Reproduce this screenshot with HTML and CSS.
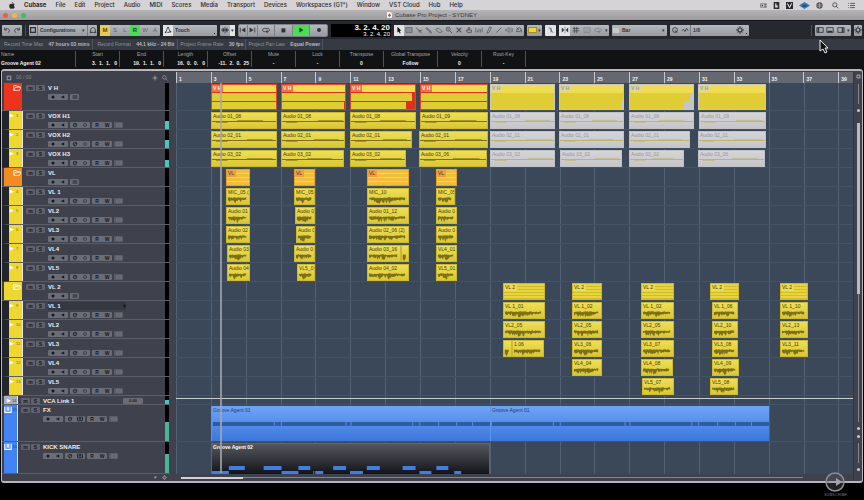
FILE: index.html
```html
<!DOCTYPE html>
<html lang="en">
  <head>
    <title>Cubase Pro Project - SYDNEY</title>
    <meta charset="UTF-8" />
    <link rel="stylesheet" href="styles.css">
  </head>
  <body>
    <svg class="symbols" aria-hidden="true">
      <symbol id="undo" viewBox="0 0 10 10"><path d="M2 2v3h3M2 5c2-3 6-2 6 1 0 1-1 2-2 2" fill="none" stroke="currentColor"/></symbol>
      <symbol id="redo" viewBox="0 0 10 10"><path d="M8 2v3H5M8 5C6 2 2 3 2 6c0 1 1 2 2 2" fill="none" stroke="currentColor"/></symbol>
      <symbol id="square" viewBox="0 0 10 10"><path d="M2 2h6v6H2z" fill="none" stroke="currentColor" stroke-width="1.5"/></symbol>
      <symbol id="house" viewBox="0 0 10 10"><path d="M2 8V5c0-4 6-4 6 0v3zM1 8h2M7 8h2" fill="none" stroke="currentColor"/></symbol>
      <symbol id="auto" viewBox="0 0 10 10"><path d="M2 8c1-1 2-6 3-6s2 5 3 6M4 8h3" fill="none" stroke="currentColor"/><circle cx="5" cy="2" r="1"/><circle cx="2" cy="8" r="1"/><circle cx="8" cy="7" r="1"/></symbol>
      <symbol id="center" viewBox="0 0 10 10"><path d="M0 5h3M7 5h3M5 1v8" stroke="currentColor"/><path d="M2 2l3 3-3 3zM8 2L5 5l3 3z"/></symbol>
      <symbol id="prev" viewBox="0 0 10 10"><path d="M1 2h1v6H1zM8 2L3 5l5 3z"/></symbol>
      <symbol id="next" viewBox="0 0 10 10"><path d="M8 2h1v6H8zM2 2l5 3-5 3z"/></symbol>
      <symbol id="loop" viewBox="0 0 10 10"><path d="M4 7H3C0 7 0 3 3 3h4c3 0 3 4 0 4" fill="none" stroke="currentColor"/><path d="M7 5v4L4 7z"/></symbol>
      <symbol id="stop" viewBox="0 0 10 10"><path d="M3 3h5v5H3z"/></symbol>
      <symbol id="play" viewBox="0 0 10 10"><path d="M3 2l5 3-5 3z"/></symbol>
      <symbol id="rec" viewBox="0 0 10 10"><circle cx="5" cy="5" r="2.5"/></symbol>
      <symbol id="arrow" viewBox="0 0 10 10"><path d="M3 1l5 5H6l1 3-1 .5L4.5 7 3 8z"/></symbol>
      <symbol id="range" viewBox="0 0 10 10"><path d="M1 2h8v6H1z" fill="#8d9094" stroke="currentColor" stroke-width=".7"/></symbol>
      <symbol id="split" viewBox="0 0 10 10"><path d="M1 2l5 4 3-1M5 5v3M6 6l2 3" fill="none" stroke="currentColor"/></symbol>
      <symbol id="glue" viewBox="0 0 10 10"><path d="M2 2l5 4 1 3-3-2-4-4z" fill="#888b90" stroke="currentColor" stroke-width=".7"/></symbol>
      <symbol id="erase" viewBox="0 0 10 10"><path d="M2 3h3l4 4-2 1H5L1 5z" fill="none" stroke="currentColor" stroke-width=".8"/></symbol>
      <symbol id="zoom" viewBox="0 0 10 10"><circle cx="4" cy="4" r="2.5" fill="none" stroke="currentColor"/><path d="M6 6l3 3M3 4h2" stroke="currentColor"/></symbol>
      <symbol id="mute" viewBox="0 0 10 10"><path d="M2 2l6 6M8 2L2 8" stroke="currentColor" stroke-width="1.4"/></symbol>
      <symbol id="comp" viewBox="0 0 10 10"><path d="M2 5h6v3H3zM4 5V2h2v3M1 6h1" fill="none" stroke="currentColor"/></symbol>
      <symbol id="warp" viewBox="0 0 10 10"><path d="M1 2v6M9 2v6M3 8V5M5 8V3M7 8V4" fill="none" stroke="currentColor" stroke-width=".8"/></symbol>
      <symbol id="pen" viewBox="0 0 10 10"><path d="M6 1l2 1-3 6-2 1V7z" fill="none" stroke="currentColor" stroke-width=".9"/></symbol>
      <symbol id="line" viewBox="0 0 10 10"><path d="M2 8l6-6" stroke="currentColor"/></symbol>
      <symbol id="speaker" viewBox="0 0 10 10"><path d="M1 4h2l2-2v6L3 6H1zM7 3c1 1 1 3 0 4M8 2c2 2 2 4 0 6" fill="none" stroke="currentColor" stroke-width=".7"/></symbol>
      <symbol id="bucket" viewBox="0 0 10 10"><path d="M2 7l1-4 3-1 2 3v3M2 7h4l2-2M2 2l3 3" fill="none" stroke="currentColor"/></symbol>
      <symbol id="curve" viewBox="0 0 10 10"><path d="M2 2c4 0 2 6 6 6M5 2v6" fill="none" stroke="currentColor" stroke-width=".7"/></symbol>
      <symbol id="snap" viewBox="0 0 10 10"><path d="M1 2l3 3-3 3zM9 2L6 5l3 3z"/><path d="M5 1v8" stroke="currentColor" stroke-width=".6"/></symbol>
      <symbol id="grid" viewBox="0 0 10 10"><path d="M3 1v8M6 1v8M1 3h8M1 6h8" stroke="currentColor" stroke-width=".8"/></symbol>
      <symbol id="quant" viewBox="0 0 10 10"><circle cx="5" cy="5" r="3" fill="none" stroke="currentColor"/><path d="M5 6l3 2" stroke="currentColor"/></symbol>
      <symbol id="zig" viewBox="0 0 10 10"><path d="M1 6l2-2 2 3 2-4 2 3" fill="none" stroke="currentColor"/></symbol>
      <symbol id="left" viewBox="0 0 10 10"><path d="M1 2h8v6H1z" fill="none" stroke="currentColor"/><path d="M2 2h2v6H2z"/></symbol>
      <symbol id="lower" viewBox="0 0 10 10"><path d="M1 2h8v6H1z" fill="none" stroke="currentColor"/><path d="M2 6h6v2H2z"/></symbol>
      <symbol id="right" viewBox="0 0 10 10"><path d="M1 2h8v6H1z" fill="none" stroke="currentColor"/><path d="M6 2h2v6H6z"/></symbol>
      <symbol id="gear" viewBox="0 0 10 10"><circle cx="5" cy="5" r="2.5" fill="none" stroke="currentColor" stroke-width="1.5"/><path d="M5 0v2M5 8v2M0 5h2M8 5h2M2 2l1 1M7 7l1 1M8 2L7 3M3 7L2 8" stroke="currentColor" stroke-width="1.2"/></symbol>
      <symbol id="folder" viewBox="0 0 10 10"><path d="M1 8V2h3l1 1h3v1M1 8l2-4h7L8 8z" fill="none" stroke="currentColor" stroke-width=".9"/></symbol>
      <symbol id="mon" viewBox="0 0 10 10"><path d="M2 4h2l3-2v6L4 6H2z"/></symbol>
      <symbol id="edit" viewBox="0 0 10 10"><circle cx="5" cy="5" r="3" fill="none" stroke="currentColor" stroke-width="1.2"/><path d="M3 6l5-3" stroke="currentColor"/></symbol>
      <symbol id="ring" viewBox="0 0 10 10"><circle cx="5" cy="5" r="2.5" fill="none" stroke="#383a42" stroke-width="1.4"/></symbol>
      <symbol id="keys" viewBox="0 0 10 10"><path d="M1 1v7h8V1M4 1v5M6 1v5" fill="none" stroke="currentColor" stroke-width="1.4"/></symbol>
      <symbol id="lanes" viewBox="0 0 10 10"><path d="M1 3h8M1 5h8M1 7h8" stroke="currentColor"/></symbol>
      <symbol id="dots" viewBox="0 0 10 6"><path d="M1 1h8v4H1z" fill="none" stroke="currentColor" stroke-width=".6"/><path d="M2 3h1M4.500 3h1M7 3h1" stroke="currentColor"/></symbol>
      <symbol id="plus" viewBox="0 0 10 10"><path d="M5 1v8M1 5h8" stroke="currentColor" stroke-width="1.4"/></symbol>
      <symbol id="search" viewBox="0 0 10 10"><circle cx="4" cy="4" r="3" fill="none" stroke="currentColor"/><path d="M6 6l3 3" stroke="currentColor"/></symbol>
    </svg>

    <header class="menubar">
      <svg class="apple" viewBox="0 0 10 12"><path d="M7 0c0 1.500-1 2.500-2.200 2.500C4.700 1.300 5.800.2 7 0zM5 3.300c.7 0 1.300-.6 2.400-.6.8 0 1.600.4 2.100 1.100-1.900 1.200-1.500 3.800.4 4.500C9.300 10 8.400 11.500 7.300 11.500c-.8 0-1.100-.5-2.100-.5s-1.400.5-2.100.5C1.500 11.500.2 8.800.2 6.700c0-2.500 1.500-3.900 2.900-3.900.8 0 1.400.5 1.900.5z"/></svg>
      <nav class="menus">
        <a href="#" class="app-name">Cubase</a>
        <a href="#">File</a>
        <a href="#">Edit</a>
        <a href="#">Project</a>
        <a href="#">Audio</a>
        <a href="#">MIDI</a>
        <a href="#">Scores</a>
        <a href="#">Media</a>
        <a href="#">Transport</a>
        <a href="#">Devices</a>
        <a href="#">Workspaces (G1*)</a>
        <a href="#">Window</a>
        <a href="#">VST Cloud</a>
        <a href="#">Hub</a>
        <a href="#">Help</a>
      </nav>
      <div class="tray">
        <svg viewBox="0 0 12 10"><path d="M1 2h7v6H1zM9 2h2v2H9zM9 6h2v2H9z" fill="none" stroke="currentColor" stroke-width=".8"/><circle cx="4" cy="5" r="1.3"/></svg>
        <svg viewBox="0 0 10 10"><path d="M1 0h8v10H1z"/><path d="M3 2h2v3h2v3H3z" fill="#d5d3d5"/></svg>
        <svg viewBox="0 0 10 10"><path d="M0 0h10v10H0z"/><path d="M2 2l3 6 3-6" fill="none" stroke="#fff" stroke-width="1.4"/></svg>
        <svg class="wide" viewBox="0 0 16 10"><path d="M8 0l8 5-8 5-8-5z" fill="#2f79b8"/><path d="M5 4h6v3H5z" fill="#1c5689"/></svg>
        <svg viewBox="0 0 10 10"><circle cx="5" cy="5" r="4.5" fill="#554e54"/><path d="M2 4h6M2 6h6M5 1v8" stroke="#c9c4c8" stroke-width=".8"/></svg>
        <svg class="spaced" viewBox="0 0 10 10"><use href="#search"/></svg>
        <svg viewBox="0 0 10 10"><path d="M0 2h1M0 5h1M0 8h1M3 2h7M3 5h7M3 8h7" stroke="currentColor"/></svg>
      </div>
    </header>

    <div class="titlebar">
      <div class="lights"><i class="red"></i><i class="amber"></i><i class="green"></i></div>
      <div class="title">
        <svg viewBox="0 0 10 12"><path d="M0 0h7l3 3v9H0z" fill="#f4eff0"/><path d="M5 3l3 4-3 3-3-3z" fill="#c23a48"/></svg>
        Cubase Pro Project - SYDNEY
      </div>
    </div>

    <div class="toolbar">
      <div class="group history" data-icons="undo redo"></div>
      <span class="sep"></span>
      <div class="group config">
        <svg class="ico"><use href="#square"/></svg>
        <select aria-label="Configurations"><option>Configurations</option></select>
        <span class="caret">▾</span>
        <button aria-label="Workspace"><svg class="ico"><use href="#house"/></svg></button>
      </div>
      <div class="group states">
        <button class="mute-on">M</button>
        <button>S</button>
        <button>L</button>
        <button class="read-on">R</button>
        <button>W</button>
        <button>A</button>
      </div>
      <div class="group automation">
        <button class="lit" aria-label="Automation panel"><svg class="ico"><use href="#auto"/></svg></button>
        <select aria-label="Automation mode"><option>Touch</option></select>
        <i class="corner"></i>
      </div>
      <div class="group scroll">
        <button aria-label="Auto-scroll"><svg class="ico"><use href="#center"/></svg></button>
        <button class="more lit" aria-label="Auto-scroll settings">▾</button>
      </div>
      <div class="group transport">
        <button aria-label="Previous marker"><svg class="ico"><use href="#prev"/></svg></button>
        <button aria-label="Next marker"><svg class="ico"><use href="#next"/></svg></button>
        <button class="big" aria-label="Cycle"><svg class="ico"><use href="#loop"/></svg></button>
        <button class="big" aria-label="Stop"><svg class="ico"><use href="#stop"/></svg></button>
        <button class="big read-on" aria-label="Play"><svg class="ico"><use href="#play"/></svg></button>
        <button class="big" aria-label="Record"><svg class="ico"><use href="#rec"/></svg></button>
      </div>
      <div class="clock"><b>3. 2. 4. 20</b><span>3. 2. 4. 20</span></div>
      <div class="group tools" data-icons="arrow range split glue erase zoom mute comp warp pen line speaker bucket"></div>
      <div class="group colors">
        <button aria-label="Colour"><i class="swatch"></i></button>
        <button class="more" aria-label="Colour list">▾</button>
      </div>
      <div class="group single lit" data-icons="curve"></div>
      <div class="group snaps">
        <button class="lit" aria-label="Snap"><svg class="ico"><use href="#snap"/></svg></button>
        <button aria-label="Grid"><svg class="ico"><use href="#grid"/></svg></button>
        <button class="faint" aria-label="Snap events"><svg class="ico"><use href="#range"/></svg></button>
        <button class="faint" aria-label="Snap cycle"><svg class="ico"><use href="#loop"/></svg></button>
        <button class="more" aria-label="Snap type">▾</button>
      </div>
      <div class="group gridtype">
        <i class="chip"></i>
        <select aria-label="Grid type"><option>Bar</option></select>
        <span class="caret">▾</span>
      </div>
      <div class="group quantize">
        <button aria-label="Quantize"><svg class="ico"><use href="#quant"/></svg></button>
        <button aria-label="Soft quantize"><svg class="ico"><use href="#zig"/></svg></button>
        <select aria-label="Quantize value"><option>1/8</option></select>
        <svg class="ico"><use href="#gear"/></svg>
        <i class="corner"></i>
      </div>
      <span class="sep push"></span>
      <div class="group panes">
        <button aria-label="Left zone"><svg class="ico"><use href="#left"/></svg></button>
        <button aria-label="Lower zone"><svg class="ico"><use href="#lower"/></svg></button>
        <button aria-label="Right zone"><svg class="ico"><use href="#right"/></svg></button>
        <button class="more" aria-label="Zones">▾</button>
      </div>
      <div class="group setup" data-icons="gear"></div>
    </div>

    <div class="status">
      <p>Record Time Max <b>47 hours 03 mins</b></p>
      <p>Record Format <b>44.1 kHz - 24 Bit</b></p>
      <p>Project Frame Rate <b>30 fps</b></p>
      <p>Project Pan Law <b>Equal Power</b></p>
    </div>

    <dl class="infoline">
      <div class="name"><dt>Name</dt><dd>Groove Agent 02</dd></div>
      <div class="pos"><dt>Start</dt><dd>3.  1.  1.   0</dd></div>
      <div class="pos"><dt>End</dt><dd>19.  1.  1.   0</dd></div>
      <div class="pos"><dt>Length</dt><dd>16.  0.  0.   0</dd></div>
      <div class="pos"><dt>Offset</dt><dd>-11.  2.  0.  25</dd></div>
      <div><dt>Mute</dt><dd>-</dd></div>
      <div><dt>Lock</dt><dd>-</dd></div>
      <div><dt>Transpose</dt><dd>0</dd></div>
      <div class="wide"><dt>Global Transpose</dt><dd>Follow</dd></div>
      <div><dt>Velocity</dt><dd>0</dd></div>
      <div><dt>Root-Key</dt><dd>-</dd></div>
    </dl>

    <main class="project">
      <section class="arrange">
        <div class="row head">
          <div class="list-head">
            <svg class="ico"><use href="#square"/></svg>
            <span>00 / 00</span>
            <button aria-label="Add track"><svg class="ico"><use href="#plus"/></svg></button>
            <button aria-label="Find track"><svg class="ico"><use href="#search"/></svg></button>
          </div>
          <div class="ruler"></div>
        </div>
        <div class="tracks"></div>
        <div class="row foot">
          <div class="list-foot"><span>▾</span><svg class="ico"><use href="#gear"/></svg></div>
          <div class="hscroll"><i></i></div>
        </div>
        <div class="overlay"><i class="playhead"></i></div>
      </section>
      <aside class="vscroll">
        <svg class="ico"><use href="#square"/></svg>
        <i class="rail"></i>
        <i class="knob"></i>
        <i class="thumb"></i>
        <i class="rest"></i>
        <i class="knob"></i>
        <i class="knob"></i>
        <i class="rail"></i>
        <i class="knob"></i>
      </aside>
    </main>

    <svg class="cursor" viewBox="0 0 10 15"><path d="M1 1v11l3-2 2 4 2-1-2-4h3z" fill="#111" stroke="#eee"/></svg>
    <div class="subscribe">
      <svg viewBox="0 0 20 20"><circle cx="10" cy="10" r="9" fill="#55565c" fill-opacity=".4" stroke="#8f8f94" stroke-width="1.5"/><path d="M4 9h7V6l6 4-6 4v-3H4z" fill="#a5a5a9"/></svg>
      <span>SUBSCRIBE</span>
    </div>

    <script src="script.js"></script>
  </body>
</html>
```

FILE: styles.css
```css
* {
  box-sizing: border-box;
}

body {
  margin: 0;
  background: #000;
  color: #c9cbd1;
  font: 5px/7px "Liberation Sans", Arial, sans-serif;
  overflow-x: hidden;
}

button, select {
  margin: 0;
  padding: 0;
  border: 0;
  background: none;
  color: inherit;
  font: inherit;
  appearance: none;
}

button {
  display: flex;
  align-items: center;
  justify-content: center;
}

svg {
  fill: currentColor;
  flex: none;
}

.symbols {
  display: none;
}

.ico {
  width: 8px;
  height: 8px;
}

/* menu bar */
.menubar {
  display: flex;
  align-items: center;
  height: 10px;
  padding: 0 9px;
  background: #d5d3d5;
  color: #2c2a2d;
  font: 500 6px/10px Inter, "Liberation Sans", sans-serif;
}

.apple {
  width: 6px;
  height: 7px;
}

.menus {
  display: flex;
  gap: 9px;
  margin-left: 9px;
}

.menus a {
  color: inherit;
  text-decoration: none;
}

.menus .app-name {
  font-weight: bold;
}

.tray {
  display: flex;
  align-items: center;
  gap: 6px;
  margin-left: auto;
}

.tray svg {
  width: 7px;
  height: 7px;
}

.tray .wide {
  width: 11px;
}

.tray .spaced {
  margin: 0 3px;
}

/* title bar */
.titlebar {
  display: flex;
  align-items: center;
  height: 10px;
  padding: 0 3px;
  background: linear-gradient(#b5b3b5, #9c9c9e);
  color: #3b3a3d;
  font-size: 6px;
}

.titlebar::after {
  content: "";
  flex: 1;
}

.lights {
  display: flex;
  flex: 1;
  gap: 4px;
}

.lights i {
  width: 5px;
  height: 5px;
  border-radius: 50%;
}

.red { background: #f4574f; }
.amber { background: #f6b53c; }
.green { background: #35c54b; }

.title {
  display: flex;
  align-items: center;
  gap: 3px;
}

.title svg {
  width: 5px;
  height: 6px;
}

/* toolbar */
.toolbar {
  display: flex;
  align-items: center;
  gap: 3px;
  height: 19px;
  padding: 0 2px;
  background: #26282f;
  border-top: 1px solid #15161b;
}

.sep {
  width: 1px;
  height: 11px;
  background: #4d5058;
}

.push {
  margin-left: auto;
}

.group {
  display: flex;
  align-items: center;
  flex: none;
  height: 11px;
  border-radius: 1px;
  background: linear-gradient(#b5b8bd, #979a9f);
  color: #303239;
}

.group button {
  flex: 1;
  height: 11px;
}

.group select {
  flex: 1;
  min-width: 0;
  height: 9px;
  padding-left: 2px;
  font-weight: bold;
}

.group .more {
  flex: none;
  width: 5px;
}

.lit, .group .lit {
  background: #e3e4e6;
}

.faint {
  opacity: .35;
}

.history { width: 20px; }
.config { width: 68px; }
.states { width: 60px; color: #62656b; font-size: 6px; }
.automation { width: 54px; }
.scroll { width: 15px; }
.tools { width: 130px; color: #4c4f55; }
.colors { width: 15px; }
.single { width: 11px; }
.snaps { width: 50px; }
.gridtype { width: 55px; }
.quantize { width: 79px; }
.panes { width: 36px; }
.setup { width: 8px; }

.config button, .automation button, .quantize button {
  flex: none;
  width: 10px;
}

.config button {
  border-left: 1px solid #777a80;
}

.config select, .quantize select {
  height: 11px;
  border-left: 1px solid #777a80;
}

.tools button:first-child {
  background: #e3e4e6;
  color: #111;
}

.group .mute-on {
  background: #e5cb55;
  color: #5a4a10;
  font-weight: bold;
}

.group .read-on {
  background: #4ddb55;
  color: #124b18;
  font-weight: bold;
}

.transport {
  width: 90px;
  height: 13px;
  border: 1px solid #7d818c;
  border-radius: 2px;
}

.transport .big {
  flex: 2;
}

.transport button + button {
  border-left: 1px solid #7c7f85;
}

.clock {
  display: flex;
  flex-direction: column;
  align-items: flex-end;
  width: 60px;
  height: 13px;
  padding-right: 1px;
  background: #000;
  color: #fff;
  font-size: 6px;
  line-height: 6px;
}

.clock b {
  font-size: 8px;
  line-height: 7px;
}

.swatch {
  width: 9px;
  height: 6px;
  background: #ecd534;
  border: 1px solid #a08f2a;
}

.chip {
  width: 6px;
  height: 5px;
  margin: 0 1px;
  background: #c7cacf;
}

.caret {
  width: 5px;
}

.corner {
  align-self: flex-end;
  width: 1px;
  height: 1px;
  margin: 2px;
  background: #222;
}

/* status line */
.status {
  display: flex;
  height: 11px;
  background: #363a43;
  color: #8f939c;
  line-height: 11px;
}

.status p {
  margin: 0;
  padding: 0 3px 0 4px;
  border-right: 1px solid #50545e;
}

.status p:nth-child(n+3) {
  padding: 0 2px;
}

.status b {
  margin-left: 4px;
  color: #b4b8c0;
}

/* info line */
.infoline {
  display: flex;
  height: 19px;
  margin: 0;
  background: #111214;
  color: #a3a5aa;
  text-align: center;
}

.infoline div {
  width: 44px;
  margin: 1px 0 2px;
  padding: 0 2px;
  border-right: 1px solid #505156;
}

.infoline .name {
  width: 76px;
  padding: 0 1px;
  text-align: left;
}

.infoline .wide {
  width: 54px;
}

.infoline dd {
  margin: 2px 0 0;
  color: #f1f1f3;
  font-weight: bold;
  white-space: pre;
}

.infoline .pos dd {
  text-align: right;
}

/* project window */
.project {
  display: flex;
  margin: 0 1px;
  border: 1px solid #b9b5bb;
  border-top-width: 2px;
  border-bottom-width: 2px;
  border-radius: 3px;
  background: #3f424c;
  overflow: hidden;
}

.arrange {
  position: relative;
  flex: 1;
  min-width: 0;
  padding-top: 1px;
}

.row {
  display: flex;
  height: 19px;
}

.head { height: 11px; }
.tall { height: 28px; }
.slim { height: 9px; }
.fx { height: 37px; }
.midi { height: 32px; }
.foot { height: 7px; }

.list-head, .track, .list-foot {
  display: flex;
  flex: none;
  width: 168px;
  margin-right: 6px;
}

.list-head {
  align-items: center;
  gap: 4px;
  padding: 0 2px 0 4px;
  color: #a5a8b0;
}

.list-head span {
  flex: 1;
  color: #858993;
}

.list-head .ico {
  width: 6px;
  height: 6px;
}

.ruler {
  display: flex;
  flex: 1;
  min-width: 0;
  overflow: hidden;
  background: #656870;
  color: #f2f2f4;
  font-weight: bold;
}

.ruler span {
  flex: none;
  width: 5.15%;
  padding: 4px 0 0 2px;
  border-left: 1px solid #c5c7cc;
}

/* track list */
.track {
  border-bottom: 1px solid #5b5e67;
  background: #3f424c;
}

.tag {
  display: flex;
  justify-content: flex-end;
  gap: 2px;
  flex: none;
  width: 18px;
  margin: 0 4px 0 2px;
  padding: 1px 1px 0 0;
  color: #fff;
}

.tag small {
  width: 5px;
  color: #6f6520;
  font-size: 4px;
}

.tag i {
  font-size: 5px;
  font-style: normal;
}

.child .track {
  border-left: 7px solid #23252d;
}

.child .tag {
  width: 14px;
  margin: 0 3px 0 0;
  border-right: 1px solid #e8e8ea;
}

.slim .tag, .fx .tag, .midi .tag {
  width: 14px;
  margin-right: 3px;
  gap: 1px;
  padding-right: 0;
  border-right: 1px solid #dfe2ea;
}

.c-blue small, .c-grey small {
  color: #27406f;
}

.c-red { background: #ee331c; }
.c-yellow { background: #eed731; }
.c-orange { background: #f08c22; }
.c-grey { background: #a9b1bf; }
.c-blue { background: #4285f2; }

.ms {
  display: flex;
  gap: 1px;
  padding-top: 2px;
}

.ms button {
  width: 9px;
  height: 6px;
  border-radius: 1px;
  background: #5f626c;
  color: #15161b;
  font-weight: bold;
}

.body {
  flex: 1;
  min-width: 0;
  padding: 1px 0 0 3px;
}

.body h2 {
  display: flex;
  align-items: center;
  justify-content: space-between;
  width: 78px;
  margin: 0 0 2px;
  color: #eceef2;
  font-size: 6px;
  line-height: 8px;
}

.slim h2 {
  width: 100px;
}

.body output {
  width: 20px;
  border-radius: 1px;
  background: #6a6d77;
  color: #17181d;
  font-size: 4px;
  line-height: 6px;
  text-align: center;
}

.body .sel {
  background: #353841;
}

.body h2 span {
  color: #15161b;
}

.controls {
  display: flex;
  gap: 2px;
}

.controls div {
  display: flex;
  width: 20px;
  height: 6px;
  border-radius: 1px;
  background: #6a6d77;
  color: #17181d;
  font-weight: bold;
  line-height: 6px;
}

.controls .one {
  width: 9px;
}

.controls .dim {
  color: #9497a0;
  background: #5a5d67;
}

.controls button {
  flex: 1;
}

.controls .ico {
  width: 6px;
  height: 6px;
}

.meter {
  display: flex;
  align-items: flex-end;
  width: 4px;
  margin-right: 1px;
  background: #000;
}

.meter i {
  width: 100%;
  background: #4cc4c0;
}

.fx .meter i, .midi .meter i {
  background: #46b898;
}

/* event lanes, one column for each tick in view */
.lane {
  display: grid;
  flex: 1;
  min-width: 0;
  grid-template-columns: repeat(677, minmax(0, 1fr));
  grid-template-rows: minmax(0, 1fr);
  padding: 1px 0 0;
  border-bottom: 1px solid #435366;
  background: #3a4859 repeating-linear-gradient(90deg, #526174 0 1px, transparent 1px 5.15%);
}

.slim .lane {
  padding-top: 2px;
}

.slim .lane::before {
  content: "";
  grid-column: 1 / -1;
  height: 1px;
  background: #c9cbd0;
}

.midi .lane {
  border-bottom: 0;
}

.clip {
  display: flex;
  flex-direction: column;
  grid-row: 1;
  min-width: 0;
  overflow: hidden;
  border: 1px solid #cdb92a;
  background: linear-gradient(#efdf55, #dac735);
  color: #3f3910;
  white-space: nowrap;
}

.clip span {
  flex: none;
  height: 7px;
  padding-left: 1px;
}

.clip svg {
  width: 100%;
  height: 9px;
  fill: #7d7019;
}

.clip.muted {
  border-color: #c1c2c6;
  background: linear-gradient(#d5d5d8, #c6c6ca);
  color: #95969b;
}

.clip.muted svg {
  fill: #bdb56b;
}

.clip.parts {
  gap: 1px;
  border-color: #e8441f;
  background: #dc3218;
}

.parts > div {
  flex: 1;
  background: #e0cc34;
}

.parts > div:first-child {
  background: #efdc50;
}

.parts span {
  display: inline-block;
  height: 7px;
  padding: 0 2px 0 1px;
  background: #f1714a;
  color: #fff2e6;
  font-weight: bold;
  vertical-align: top;
}

.clip.parts.muted {
  gap: 0;
  border-color: #c9c9b4;
  background: #c4c5c9;
}

.parts.muted span {
  background: #dcd6a0;
  color: #a39f7d;
}

.clip.orange {
  border-color: #e99f2a;
  background: repeating-linear-gradient(#f2bd38 0 3px, #ffd95a 3px 4px);
}

.orange span {
  align-self: flex-start;
  padding-right: 2px;
  background: #ef9f40;
}

.clip.lined {
  background: repeating-linear-gradient(#e8d53e 0 2px, #d0bc2c 2px 3px);
}

.lined span {
  align-self: flex-start;
  padding-right: 2px;
  background: #eddc50;
}

.clip.blue {
  border-width: 0 0 0 1px;
  border-color: #5f97ee;
  background: linear-gradient(#6fa4f7, #3b76db);
  color: #1f3c70;
}

.blue span {
  height: 16px;
  padding-top: 1px;
}

.clip.blue svg {
  height: 4px;
  fill: #2d5ca0;
}

.clip.dark {
  border-color: #62656c;
  border-bottom: 0;
  background: linear-gradient(#54575d, #12141a);
  color: #fff;
  font-weight: bold;
}

.clip.dark svg {
  height: 8px;
  margin-top: auto;
  fill: #437de0;
}

.overlay {
  position: absolute;
  inset: 12px 0 8px 174px;
  pointer-events: none;
}

.playhead {
  position: absolute;
  left: 6.5%;
  width: 2px;
  height: 100%;
  background: #a5a8ad;
  opacity: .8;
}

/* scroll bars */
.list-foot {
  align-items: center;
  justify-content: flex-end;
  gap: 5px;
  padding-right: 3px;
  color: #a5a8af;
}

.foot .ico {
  width: 5px;
  height: 5px;
}

.hscroll {
  flex: 1;
  height: 1px;
  margin: 3px 50px 0 5px;
  background: #85868d;
}

.hscroll i {
  display: block;
  width: 10%;
  height: 2px;
  background: #d2d2d5;
}

.vscroll {
  display: flex;
  flex-direction: column;
  align-items: center;
  gap: 5px;
  width: 9px;
  padding: 3px 0 10px;
  border-left: 1px solid #343640;
}

.vscroll .ico {
  width: 5px;
  height: 5px;
}

.rail {
  width: 1px;
  height: 20px;
  background: #85868d;
}

.knob {
  width: 3px;
  height: 3px;
  border-radius: 50%;
  background: #c5c5c9;
}

.thumb {
  flex: 4;
  width: 3px;
  margin-top: 6px;
  background: #b9bac0;
}

.rest {
  flex: 3;
  width: 1px;
  margin-top: -5px;
  background: #85868d;
}

/* things that float over the window */
.cursor {
  position: absolute;
  top: 39px;
  right: 35px;
  width: 10px;
  height: 15px;
}

.subscribe {
  position: absolute;
  top: 472px;
  right: 17px;
  display: flex;
  flex-direction: column;
  align-items: center;
  color: #77777a;
  font-size: 4px;
  line-height: 6px;
}

.subscribe svg {
  width: 20px;
  height: 20px;
}
```

FILE: script.js
```js
const icon = name => `<svg class="ico"><use href="#${name}"/></svg>`;

// clips are [start, end, label], in ticks from the left edge of the view
const tracks = [
  { name: 'V H', type: 'folder', size: 'tall', color: 'red', look: 'parts', clips: [
    [35, 101, 'V H', 100, 100], [105, 170, 'V H', 100, 98], [174, 240, 'V H', 95, 86], [244, 312, 'V H', 100, 100],
    [314, 379, 'V H', 100, 100], [383, 448, 'V H', 100, 97], [453, 518, 'V H', 95, 86], [522, 590, 'V H', 100, 100]] },
  { name: 'VOX H1', num: 1, level: 45, look: 'flat', clips: [
    [35, 101, 'Audio 01_08'], [105, 169, 'Audio 01_08'], [174, 240, 'Audio 01_08'], [244, 312, 'Audio 01_09'],
    [314, 379, 'Audio 01_08'], [383, 448, 'Audio 01_08'], [453, 518, 'Audio 01_08'], [523, 590, 'Audio 01_09']] },
  { name: 'VOX H2', num: 2, level: 45, look: 'flat', clips: [
    [35, 101, 'Audio 02_01'], [105, 169, 'Audio 02_01'], [174, 236, 'Audio 02_01'], [243, 312, 'Audio 02_01'],
    [314, 379, 'Audio 02_01'], [383, 448, 'Audio 02_01'], [453, 514, 'Audio 02_01'], [522, 590, 'Audio 02_01']] },
  { name: 'VOX H3', num: 3, level: 38, look: 'flat', clips: [
    [35, 101, 'Audio 03_02'], [105, 168, 'Audio 03_02'], [174, 230, 'Audio 03_02'], [243, 311, 'Audio 03_06'],
    [314, 379, 'Audio 03_02'], [384, 446, 'Audio 03_02'], [453, 508, 'Audio 03_02'], [522, 589, 'Audio 03_06']] },
  { name: 'VL', type: 'folder', color: 'orange', look: 'orange', clips: [
    [50, 74, 'VL'], [118, 139, 'VL'], [191, 233, 'VL'], [260, 281, 'VL']] },
  { name: 'VL 1', num: 4, clips: [[50, 74, 'MIC_05 ('], [118, 139, 'MIC_05'], [191, 233, 'MIC_10'], [260, 279, 'MIC_05']] },
  { name: 'VL2', num: 5, clips: [[50, 74, 'Audio 01'], [119, 139, 'Audio 0'], [191, 233, 'Audio 01_12'], [260, 281, 'Audio 0']] },
  { name: 'VL3', num: 6, clips: [[50, 74, 'Audio 02'], [120, 139, 'Audio 0'], [191, 233, 'Audio 02_06 (2)'], [260, 281, 'Audio 0']] },
  { name: 'VL4', num: 7, clips: [[51, 74, 'Audio 03'], [118, 139, 'Audio 0'], [191, 225, 'Audio 03_16'], [225, 233, ''], [260, 281, 'VL4_01']] },
  { name: 'VL5', num: 8, clips: [[51, 74, 'Audio 04'], [121, 139, 'VL5_0'], [191, 233, 'Audio 04_02'], [260, 281, 'VL5_01']] },
  { name: 'VL 2', type: 'folder', color: 'yellow', look: 'lined', clips: [
    [327, 369, 'VL 2'], [396, 426, 'VL 2'], [465, 498, 'VL 2'], [534, 563, 'VL 2'], [604, 632, 'VL 2']] },
  { name: 'VL 1', num: 9, selected: true, clips: [
    [327, 369, 'VL 1_01'], [396, 426, 'VL 1_02'], [465, 498, 'VL 1_02'], [536, 562, 'VL 1_06'], [604, 632, 'VL 1_10']] },
  { name: 'VL2', num: 10, clips: [
    [327, 369, 'VL2_05'], [396, 426, 'VL2_05'], [465, 498, 'VL2_05'], [536, 562, 'VL2_10'], [604, 632, 'VL2_13']] },
  { name: 'VL3', num: 11, clips: [
    [327, 336, ''], [336, 368, '1.06'], [396, 426, 'VL3_06'], [465, 498, 'VL3_07'], [536, 562, 'VL3_08'], [604, 632, 'VL3_11']] },
  { name: 'VL4', num: 12, clips: [[396, 426, 'VL4_04'], [465, 497, 'VL4_08'], [536, 563, 'VL4_09']] },
  { name: 'VL5', num: 13, clips: [[466, 498, 'VL5_07'], [534, 562, 'VL5_08']] },
  { name: 'VCA Link 1', num: 14, type: 'vca', size: 'slim', color: 'grey', level: 50, clips: [] },
  { name: 'FX', num: 15, type: 'inst', size: 'fx', color: 'blue', level: 52, look: 'blue', clips: [
    [35, 314, 'Groove Agent 01'], [314, 593, 'Groove Agent 01']] },
  { name: 'KICK SNARE', num: 16, type: 'inst', size: 'midi', color: 'blue', level: 62, look: 'dark', clips: [
    [35, 314, 'Groove Agent 02']] }
];

let seed = 7;
const random = () => {
  seed = (seed * 16807) % 2147483647;
  return seed / 2147483647;
};

const svg = (width, height, shape) =>
  `<svg viewBox="0 0 ${width} ${height}" preserveAspectRatio="none">${shape}</svg>`;

const box = (x, y, w, h) => `<rect x="${x}" y="${y}" width="${w}" height="${h}"/>`;

function waveform(width) {
  const top = [];
  const bottom = [];
  for (let x = 1; x < width - 2; x++) {
    const swell = 0.4 + Math.sin(Math.PI * Math.min(1, x / width * 1.3));
    top.push(`${x},${(2.2 - random()).toFixed(1)}`);
    bottom.unshift(`${x},${(3.2 + random() * 3.4 * swell).toFixed(1)}`);
  }
  return svg(width, 9, `<polygon points="${top.concat(bottom).join(' ')}"/>`);
}

function flatWave(width) {
  const turn = Math.round(width * (0.4 + random() * 0.2));
  return svg(width, 9, box(0, 1, width, 1) + box(turn, 0.4, width * 0.4, 1.4) + box(4, 2, 12, 0.6));
}

function hits(width) {
  const gaps = [62, 69, 134, 139, 201, 208, 227, 245, 261];
  let x = 1;
  let shape = '';
  gaps.forEach(gap => {
    shape += box(x, 0, gap - x, 4);
    x = gap + 1;
  });
  return svg(width, 4, shape + box(x, 0, width - x, 4));
}

function notes(width) {
  const high = [[17, 16], [52, 18], [87, 12], [122, 13], [156, 13], [192, 13], [226, 12]];
  const low = [[0, 17], [70, 17], [102, 1], [104, 8], [139, 13], [209, 12], [244, 7]];
  return svg(width, 8,
    high.map(n => box(n[0], 0, n[1], 4)).join('') +
    low.map(n => box(n[0], 5, n[1], 3)).join(''));
}

function clipHtml(track, clip) {
  const [start, end, label] = clip;
  const muted = start >= 314 && (track.look === 'parts' || track.look === 'flat');
  const place = `style="grid-column: ${start + 1} / ${end + 1}"`;
  const width = end - start;
  let inside = `<span>${label}</span>`;

  if (track.look === 'parts') {
    inside = `<div>${inside}</div><div style="width: ${clip[3]}%"></div><div style="width: ${clip[4]}%"></div>`;
  } else if (track.look === 'flat') {
    inside += flatWave(width);
  } else if (track.look === 'blue') {
    inside += hits(width);
  } else if (track.look === 'dark') {
    inside += notes(width);
  } else if (!track.look) {
    inside += waveform(width);
  }
  return `<div class="clip ${track.look || ''} ${muted ? 'muted' : ''}" ${place}>${inside}</div>`;
}

function controls(track) {
  if (track.type === 'vca') return '';
  const record = `<div><button aria-label="Record">${icon('rec')}</button><button aria-label="Monitor">${icon('mon')}</button></div>`;
  if (track.type === 'folder') {
    return `<div class="controls">${record}<div class="one"><button aria-label="Group">${icon('lanes')}</button></div></div>`;
  }
  const second = icon(track.type === 'inst' ? 'keys' : 'ring');
  return `<div class="controls">${record}
    <div><button aria-label="Edit">${icon('edit')}</button><button aria-label="Open">${second}</button></div>
    <div><button>R</button><button>W</button></div>
    <div class="one dim"><button aria-label="Lanes">${icon('dots')}</button></div></div>`;
}

function trackHtml(track) {
  const child = !track.type;
  let tag = `<i>▶</i><small>${track.num}</small>`;
  if (track.type === 'folder') tag = icon('folder');
  if (track.type === 'inst') tag = `${icon('keys')}<small>${track.num}</small>`;
  let extra = '';
  if (track.type === 'vca') extra = '<output>0.00</output>';
  if (track.selected) extra = '<span>▾</span>';

  return `<div class="row ${track.size || ''} ${child ? 'child' : ''}">
    <div class="track">
      <div class="tag c-${track.color || 'yellow'}">${tag}</div>
      <div class="ms"><button>m</button><button>S</button></div>
      <div class="body"><h2 class="${track.selected ? 'sel' : ''}">${track.name}${extra}</h2>${controls(track)}</div>
      <div class="meter"><i style="height: ${track.level || 0}%"></i></div>
    </div>
    <div class="lane">${track.clips.map(clip => clipHtml(track, clip)).join('')}</div>
  </div>`;
}

document.querySelector('.tracks').innerHTML = tracks.map(trackHtml).join('');

let bars = '';
for (let bar = 1; bar < 40; bar += 2) {
  bars += `<span>${bar}</span>`;
}
document.querySelector('.ruler').innerHTML = bars;

document.querySelectorAll('[data-icons]').forEach(group => {
  group.innerHTML = group.dataset.icons.split(' ')
    .map(name => `<button aria-label="${name}">${icon(name)}</button>`).join('');
});
```
